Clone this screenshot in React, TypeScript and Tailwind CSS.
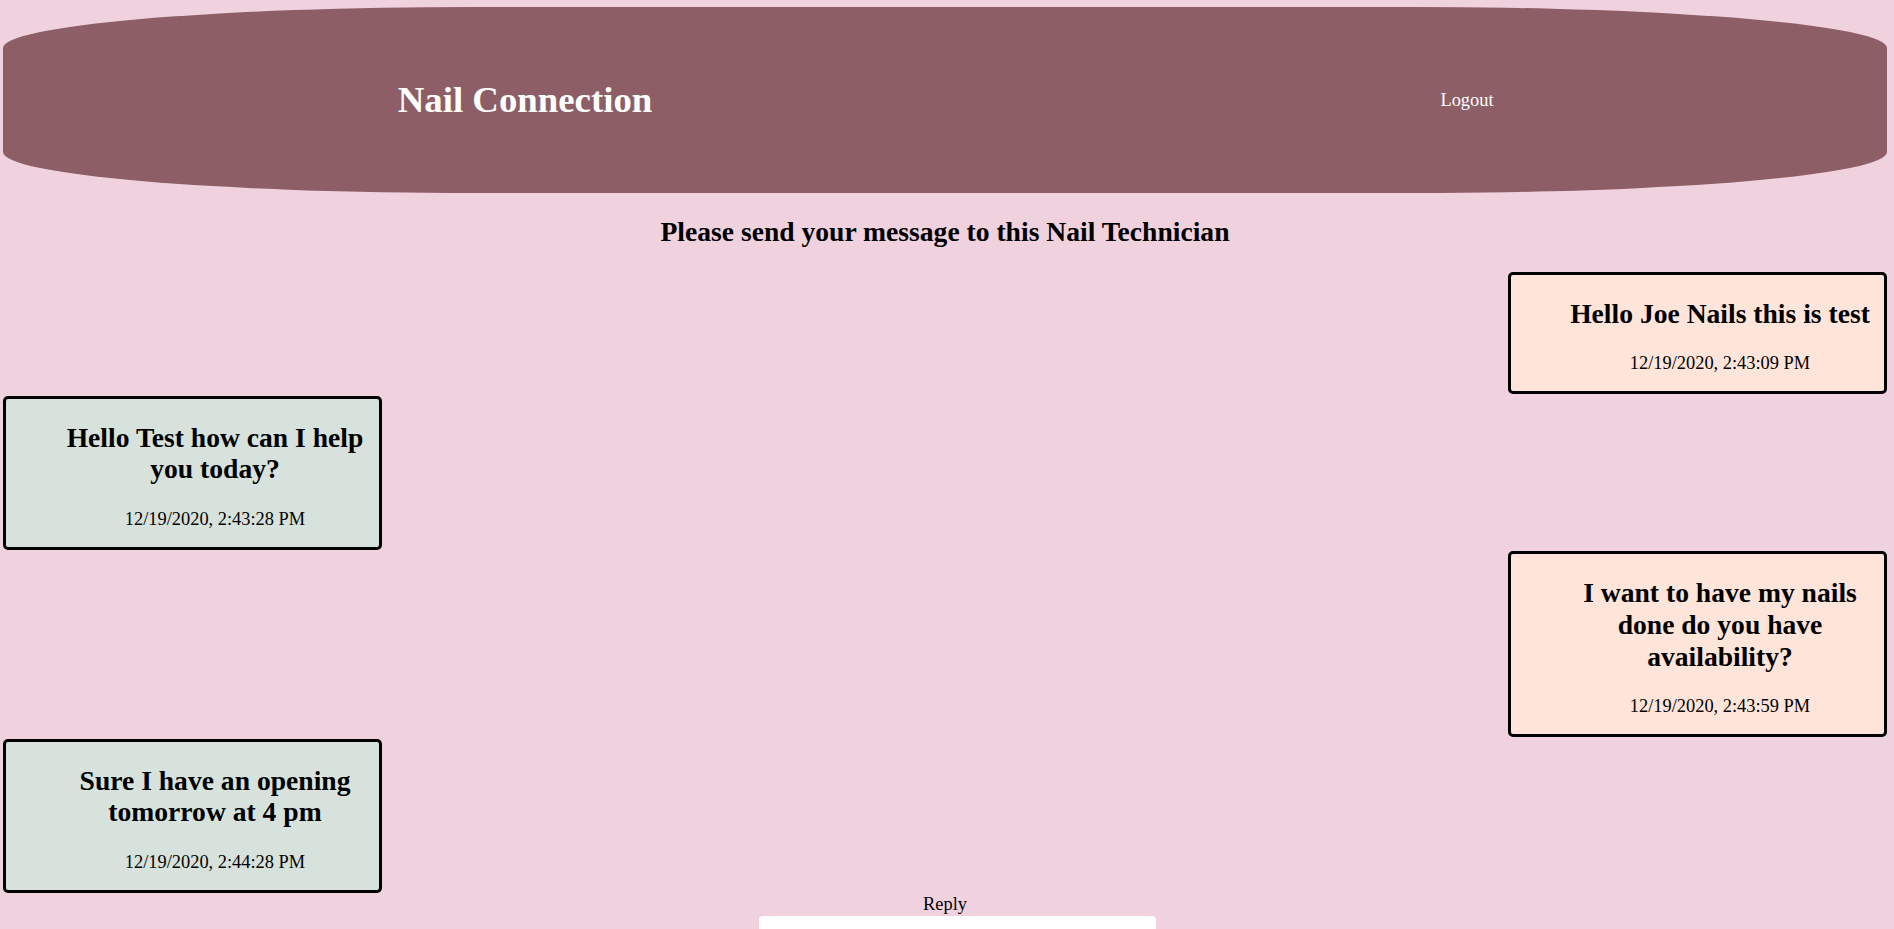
import React from 'react';

type Message = {
  text: string;
  time: string;
  mine: boolean;
};

const messages: Message[] = [
  { text: 'Hello Joe Nails this is test', time: '12/19/2020, 2:43:09 PM', mine: true },
  { text: 'Hello Test how can I help you today?', time: '12/19/2020, 2:43:28 PM', mine: false },
  { text: 'I want to have my nails done do you have availability?', time: '12/19/2020, 2:43:59 PM', mine: true },
  { text: 'Sure I have an opening tomorrow at 4 pm', time: '12/19/2020, 2:44:28 PM', mine: false },
];

function MessageBox({ message }: { message: Message }) {
  const colour = message.mine ? 'self-end bg-[#ffe5d9]' : 'self-start bg-[#d8e2dc]';
  return (
    <div className={`w-[379px] border-[3px] border-black rounded-[5px] pl-[45px] text-center ${colour}`}>
      <h2 className="mt-[23px] mb-[24px] text-[27.6px] leading-[31.7px] font-bold">{message.text}</h2>
      <p className="mb-[16.5px] text-[18.4px] leading-[21.2px]">{message.time}</p>
    </div>
  );
}

export default function App() {
  return (
    <div
      className="min-h-[929px] bg-[#f0d2de] pl-[3px] pr-[7px] text-black overflow-hidden"
      style={{ fontFamily: '"Liberation Serif", "Times New Roman", serif' }}
    >
      <nav className="mt-[7px] h-[186px] bg-[#8d5e66] rounded-[25%/22%] grid grid-cols-[1044px_1fr] items-center text-white">
        <h1 className="text-center text-[36.8px] font-bold leading-[42px]">Nail Connection</h1>
        <a className="text-center text-[18.4px] leading-[21px] cursor-pointer">Logout</a>
      </nav>

      <h2 className="mt-[23px] mb-[24px] text-center text-[27.6px] leading-[31.7px] font-bold">
        Please send your message to this Nail Technician
      </h2>

      <section className="flex flex-col gap-[1.5px]">
        {messages.map((m) => (
          <MessageBox key={m.time} message={m} />
        ))}
      </section>

      <div className="mt-[1px] text-center text-[18.4px] leading-[21px]">Reply</div>
      <div className="ml-[756px] mt-[1px] w-[397px] h-[60px] bg-white rounded-[4px]" />
    </div>
  );
}
